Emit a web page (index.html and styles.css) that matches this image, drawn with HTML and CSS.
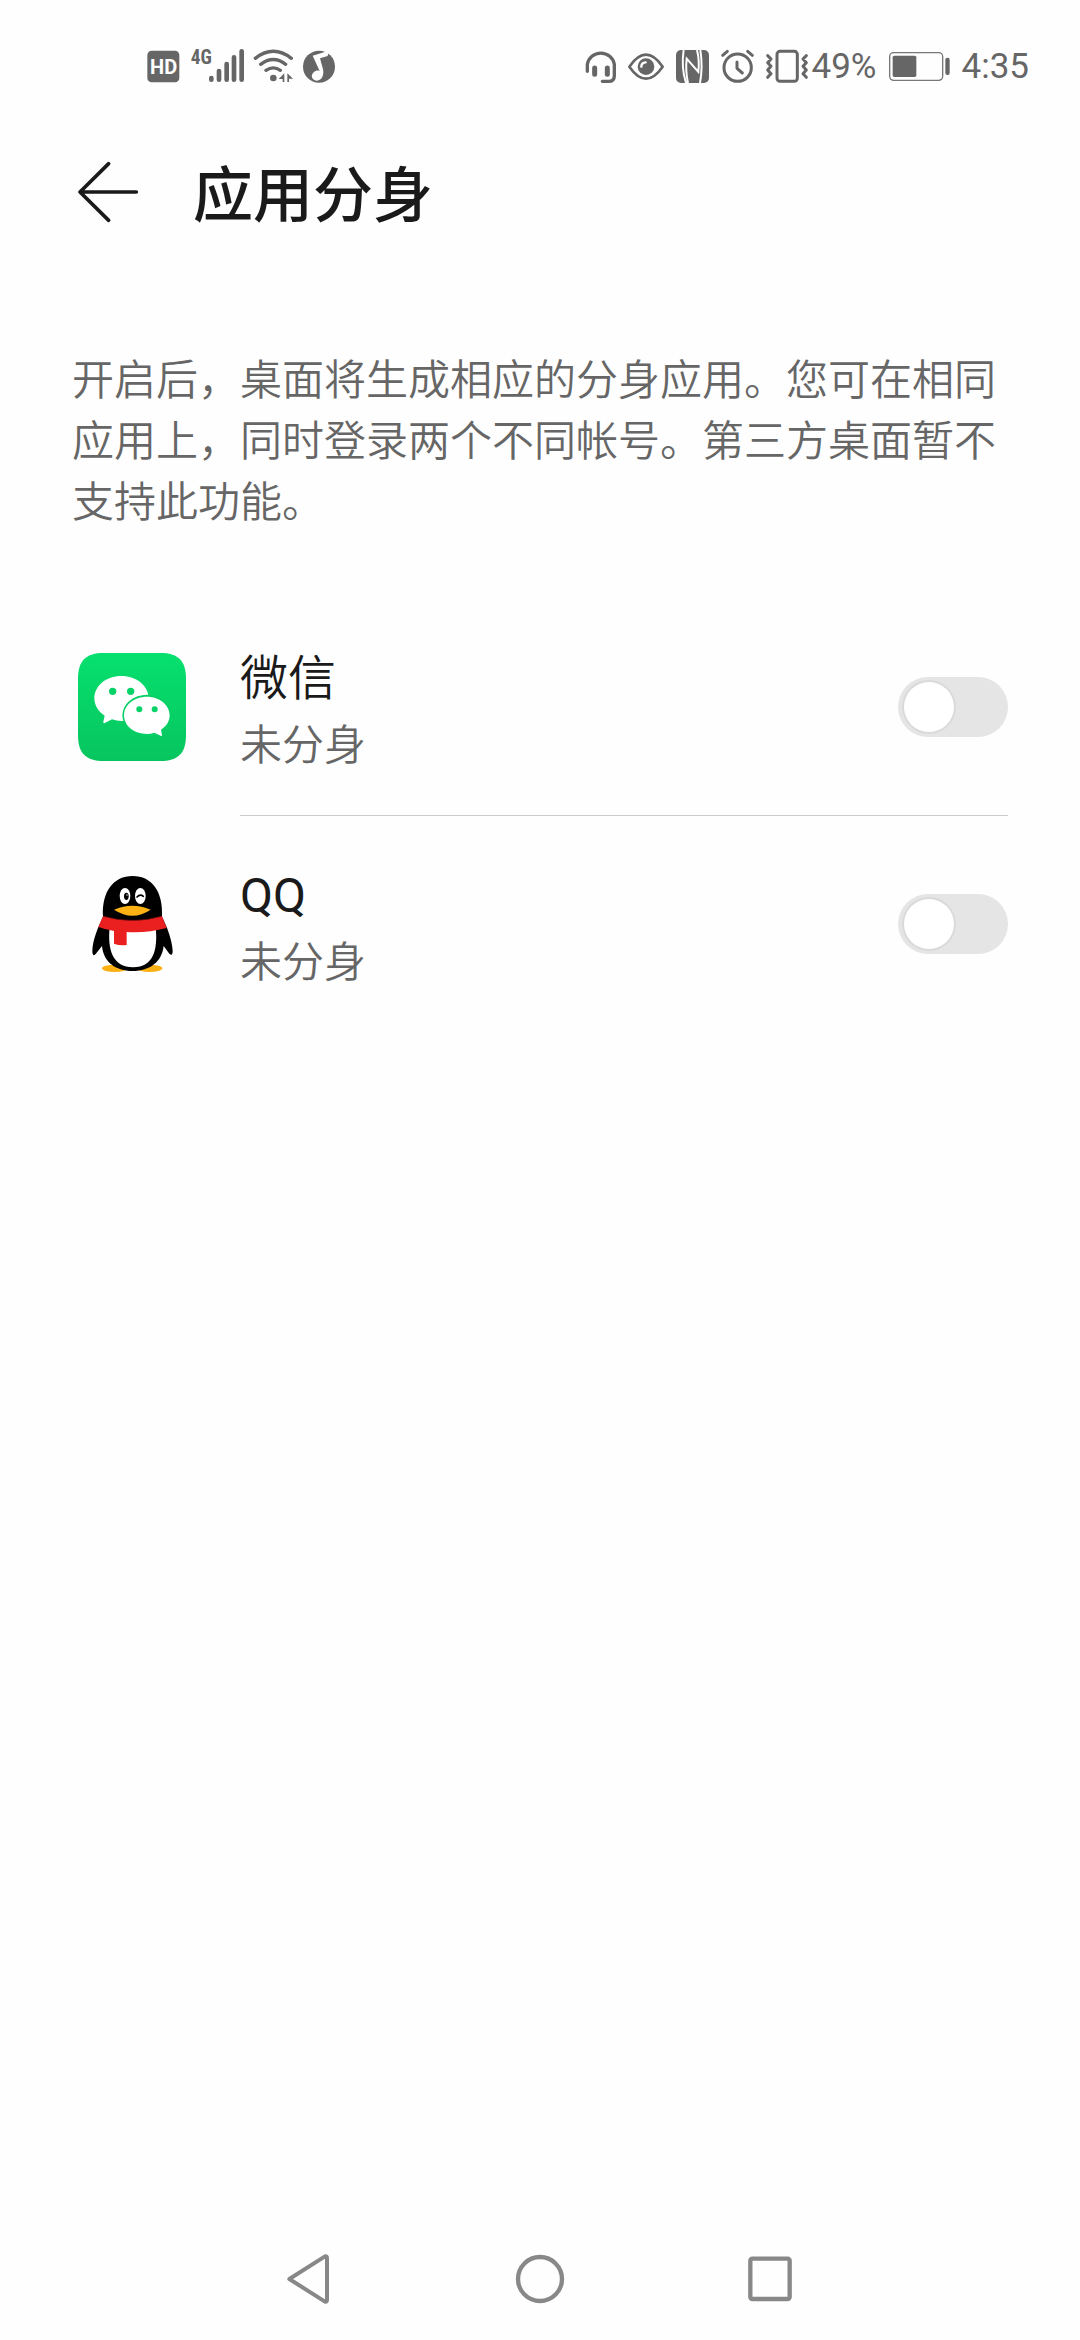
FILE: index.html
```html
<!DOCTYPE html>
<html lang="zh-CN">
<head>
<meta charset="utf-8">
<meta name="viewport" content="width=device-width, initial-scale=1">
<title>应用分身</title>
<link rel="stylesheet" href="styles.css">
</head>
<body>
<div class="status-bar">
  <div class="status-group status-left">
    <svg width="34" height="36" viewBox="51 54 102 108" aria-hidden="true">
      <rect x="52" y="62" width="96" height="95" rx="13" fill="#666"/>
      <text x="101" y="131" class="hd-text">HD</text>
    </svg>
    <svg width="53" height="36" viewBox="183 54 159 108" aria-hidden="true">
      <text x="182" y="102" class="net-text">4G</text>
      <g stroke="#666" stroke-width="14" stroke-linecap="round">
        <path d="M244 144V149M267 123V149M290 102V149M312 82V149M335 64V149"/>
      </g>
    </svg>
    <svg width="39" height="36" viewBox="372 54 117 108" aria-hidden="true">
      <g fill="none" stroke="#666" stroke-width="10" stroke-linecap="round">
        <path d="M376 85Q430 43 484 85M392 103Q430 74 467 103M408 121Q430 106 451 121"/>
      </g>
      <circle cx="430" cy="144" r="10" fill="#666"/>
      <path d="M446 147L463 130V156H458V147ZM472 130V156H477V146H489Z" fill="#666"/>
    </svg>
    <svg width="33" height="36" viewBox="519 54 99 108" aria-hidden="true">
      <circle cx="567" cy="110" r="48" fill="#666"/>
      <path d="M548 77L596 62L593 78L570 85L579 118C583 135 575 153 560 152C545 151 541 136 551 127C557 121 564 121 569 123Z" fill="#fefefe"/>
    </svg>
  </div>
  <div class="status-group status-right">
    <svg width="30" height="36" viewBox="45 54 90 108" aria-hidden="true">
      <path d="M49 124V103A41 40 0 0 1 130 103V137Q130 154 113 154H94" fill="none" stroke="#666" stroke-width="10" stroke-linecap="round"/>
      <path d="M71 114V133M109 114V133" stroke="#666" stroke-width="15" stroke-linecap="round"/>
    </svg>
    <svg width="36" height="36" viewBox="171 54 108 108" aria-hidden="true">
      <path d="M175 110Q225 38 275 110Q225 182 175 110Z" fill="none" stroke="#666" stroke-width="8" stroke-linejoin="round"/>
      <circle cx="225" cy="110" r="25" fill="#666"/>
      <path d="M211 110Q211 98 224 97" fill="none" stroke="#fefefe" stroke-width="7" stroke-linecap="round"/>
    </svg>
    <svg width="33" height="36" viewBox="315 54 99 108" aria-hidden="true">
      <rect x="315" y="60" width="99" height="99" rx="15" fill="#666"/>
      <path d="M338 60Q330 112 345 159M351 159Q343 122 347 86L382 126Q386 92 378 60M388 60Q396 112 387 159" fill="none" stroke="#fefefe" stroke-width="6"/>
    </svg>
    <svg width="33" height="36" viewBox="450 54 99 108" aria-hidden="true">
      <g fill="none" stroke="#666" stroke-width="9" stroke-linecap="round" stroke-linejoin="round">
        <circle cx="500" cy="113" r="41"/>
        <path d="M498 96V115L514 129M455 76L469 64M530 64L544 76"/>
      </g>
    </svg>
    <svg width="42" height="36" viewBox="585 54 126 108" aria-hidden="true">
      <g fill="none" stroke="#666" stroke-width="9" stroke-linejoin="round" stroke-linecap="round">
        <rect x="618" y="64" width="61" height="90" rx="9"/>
        <path d="M590 77L600 87L590 98L600 109L590 120L600 131L590 142M706 77L696 87L706 98L696 109L706 120L696 131L706 142"/>
      </g>
    </svg>
    <span class="status-text percent">49%</span>
    <svg width="61" height="36" viewBox="266 54 183 108" aria-hidden="true">
      <rect x="268" y="68" width="159" height="83" rx="12" fill="none" stroke="#777" stroke-width="4"/>
      <rect x="277" y="77" width="71" height="64" rx="5" fill="#666"/>
      <rect x="435" y="83" width="13" height="52" rx="6" fill="#666"/>
    </svg>
    <time class="status-text">4:35</time>
  </div>
</div>

<header class="app-header">
  <button class="back-button" type="button" aria-label="返回">
    <svg width="60" height="60" viewBox="54 66 180 180" aria-hidden="true">
      <path d="M146 71L60 156L146 241M60 156H229" fill="none" stroke="#1a1a1a" stroke-width="11" stroke-linecap="round" stroke-linejoin="round"/>
    </svg>
  </button>
  <h1 class="app-title">应用分身</h1>
</header>

<main class="content">
  <p class="description">开启后，桌面将生成相应的分身应用。您可在相同应用上，同时登录两个不同帐号。第三方桌面暂不支持此功能。</p>
  <ul class="app-list">
    <li class="app-row">
      <svg class="app-icon" viewBox="36 51 360 360" aria-hidden="true">
        <defs>
          <linearGradient id="wechat-green" x1="0" y1="0" x2="0" y2="1">
            <stop offset="0" stop-color="#06e06e"/>
            <stop offset="1" stop-color="#07c55f"/>
          </linearGradient>
        </defs>
        <path d="M132 69H300C355 69 378 92 378 147V315C378 370 355 393 300 393H132C77 393 54 370 54 315V147C54 92 77 69 132 69Z" fill="url(#wechat-green)"/>
        <path d="M184 138C230 138 266 168 266 205C266 242 230 273 184 273Q170 273 156 268L133 280Q129 280 130 275L134 257C115 245 103 226 103 205C103 168 138 138 184 138Z" fill="#fff"/>
        <ellipse cx="261" cy="256" rx="74" ry="62" fill="#06d065"/>
        <path d="M261 200C299 200 329 225 329 256C329 274 319 289 303 299L306 315Q306 319 302 317L283 308Q272 312 261 312C222 312 192 287 192 256C192 225 222 200 261 200Z" fill="#fff"/>
        <g fill="#06d267">
          <circle cx="158" cy="184" r="11"/>
          <circle cx="212" cy="184" r="11"/>
          <circle cx="238" cy="238" r="9"/>
          <circle cx="284" cy="238" r="9"/>
        </g>
      </svg>
      <div class="app-body">
        <label class="app-text" for="clone-wechat">
          <span class="app-name">微信</span>
          <span class="app-state">未分身</span>
        </label>
        <input class="switch" type="checkbox" role="switch" id="clone-wechat">
      </div>
    </li>
    <li class="app-row">
      <svg class="app-icon" viewBox="36 42 360 360" aria-hidden="true">
        <ellipse cx="164" cy="355" rx="38" ry="11" fill="#fbb014"/>
        <ellipse cx="269" cy="355" rx="38" ry="11" fill="#fbb014"/>
        <path d="M129 200C125 125 160 78 218 78C276 78 310 125 306 200C320 228 336 268 338 302C338 315 334 317 328 311L311 288C306 335 270 363 218 363C166 363 130 335 126 288L107 312C101 319 97 315 97 302C98 268 116 228 129 200Z" fill="#000"/>
        <path d="M149 232H287C294 300 280 352 219 352C158 352 142 300 149 232Z" fill="#fff"/>
        <path d="M129 199Q218 224 306 199L320 234Q260 250 200 246V285Q180 288 162 281V243Q137 239 115 231Z" fill="#e9201f"/>
        <path d="M129 199Q218 224 306 199" fill="none" stroke="#8c0e0e" stroke-width="2"/>
        <ellipse cx="195" cy="138" rx="16" ry="24" fill="#fff"/>
        <ellipse cx="241" cy="138" rx="16" ry="24" fill="#fff"/>
        <ellipse cx="199" cy="139" rx="7" ry="11" fill="#000"/>
        <circle cx="201" cy="135" r="2" fill="#fff"/>
        <path d="M231 141Q240 131 250 139" fill="none" stroke="#000" stroke-width="5" stroke-linecap="round"/>
        <path d="M162 179Q217 155 272 179Q218 215 162 179Z" fill="#fbb014"/>
      </svg>
      <div class="app-body">
        <label class="app-text" for="clone-qq">
          <span class="app-name latin">QQ</span>
          <span class="app-state">未分身</span>
        </label>
        <input class="switch" type="checkbox" role="switch" id="clone-qq">
      </div>
    </li>
  </ul>
</main>

<nav class="nav-bar">
  <button class="nav-button" type="button" aria-label="后退">
    <svg width="50" height="50" viewBox="42 42 150 150" aria-hidden="true">
      <path d="M55 117L162 49Q168 47 168 54V180Q168 187 162 185Z" fill="none" stroke="#888" stroke-width="12" stroke-linejoin="round"/>
    </svg>
  </button>
  <button class="nav-button" type="button" aria-label="主屏幕">
    <svg width="50" height="50" viewBox="709 42 150 150" aria-hidden="true">
      <circle cx="784" cy="117" r="66" fill="none" stroke="#888" stroke-width="13"/>
    </svg>
  </button>
  <button class="nav-button" type="button" aria-label="最近任务">
    <svg width="50" height="50" viewBox="1374 42 150 150" aria-hidden="true">
      <rect x="1390" y="56" width="118" height="121" rx="6" fill="none" stroke="#888" stroke-width="13"/>
    </svg>
  </button>
</nav>
</body>
</html>
```

FILE: styles.css
```css
* {
  box-sizing: border-box;
}

body {
  margin: 0;
  min-height: 100vh;
  display: flex;
  flex-direction: column;
  background: #fefefe;
  color: #1a1a1a;
  font-family: Roboto, "Noto Sans CJK SC", sans-serif;
  font-weight: 350;
}

button {
  display: flex;
  align-items: center;
  justify-content: center;
  padding: 0;
  border: 0;
  background: none;
}

svg {
  display: block;
  flex: none;
  overflow: visible;
}

.status-bar {
  height: 132px;
  padding: 0 51px 0 147px;
  display: flex;
  align-items: center;
  justify-content: space-between;
}

.status-group {
  display: flex;
  align-items: center;
}

.status-left {
  gap: 10px;
}

.status-right {
  gap: 12px;
}

.status-text {
  padding-top: 2px;
  color: #666;
  font-size: 35px;
  font-weight: 400;
  line-height: 36px;
}

.percent {
  margin-left: -8px;
}

.hd-text {
  fill: #fefefe;
  font: bold 60px Roboto, sans-serif;
  text-anchor: middle;
}

.net-text {
  fill: #666;
  font: bold 58px "Roboto Condensed", "Liberation Sans Narrow", Roboto, sans-serif;
}

.app-header {
  height: 120px;
  padding: 0 72px;
  display: flex;
  align-items: center;
  gap: 49px;
}

.back-button {
  width: 72px;
  height: 72px;
}

.app-title {
  margin: 0;
  padding-top: 10px;
  font-size: 60px;
  font-weight: 500;
  line-height: 80px;
}

.content {
  padding: 98px 72px 0;
}

.description {
  margin: 0;
  color: #666;
  font-size: 42px;
  line-height: 61px;
}

.app-list {
  margin: 65px 0 0;
  padding: 0;
  list-style: none;
}

.app-row {
  display: flex;
  align-items: center;
  gap: 48px;
}

.app-icon {
  width: 120px;
  height: 120px;
}

.app-body {
  flex: 1;
  height: 218px;
  display: flex;
  align-items: center;
  justify-content: space-between;
  border-bottom: 1px solid #ccc;
}

.app-row:last-child .app-body {
  height: 216px;
  border-bottom: 0;
}

.app-text {
  display: flex;
  flex-direction: column;
  padding-top: 6px;
}

.app-name {
  font-size: 48px;
  line-height: 72px;
}

.latin {
  font-weight: 400;
}

.app-state {
  color: #666;
  font-size: 42px;
  line-height: 62px;
}

.switch {
  appearance: none;
  flex: none;
  width: 110px;
  height: 60px;
  margin: 0;
  padding: 5px 6px;
  border-radius: 30px;
  background: #e5e5e5;
}

.switch::before {
  content: "";
  display: block;
  width: 50px;
  height: 50px;
  border-radius: 50%;
  background: #fff;
  box-shadow: 0 0 0 2px #dadada;
}

.switch:checked {
  background: #0a59f7;
}

.switch:checked::before {
  margin-left: auto;
}

.nav-bar {
  margin-top: auto;
  height: 122px;
  display: grid;
  grid-template-columns: repeat(3, 230px);
  justify-content: center;
}

.nav-button {
  height: 100%;
}
```
